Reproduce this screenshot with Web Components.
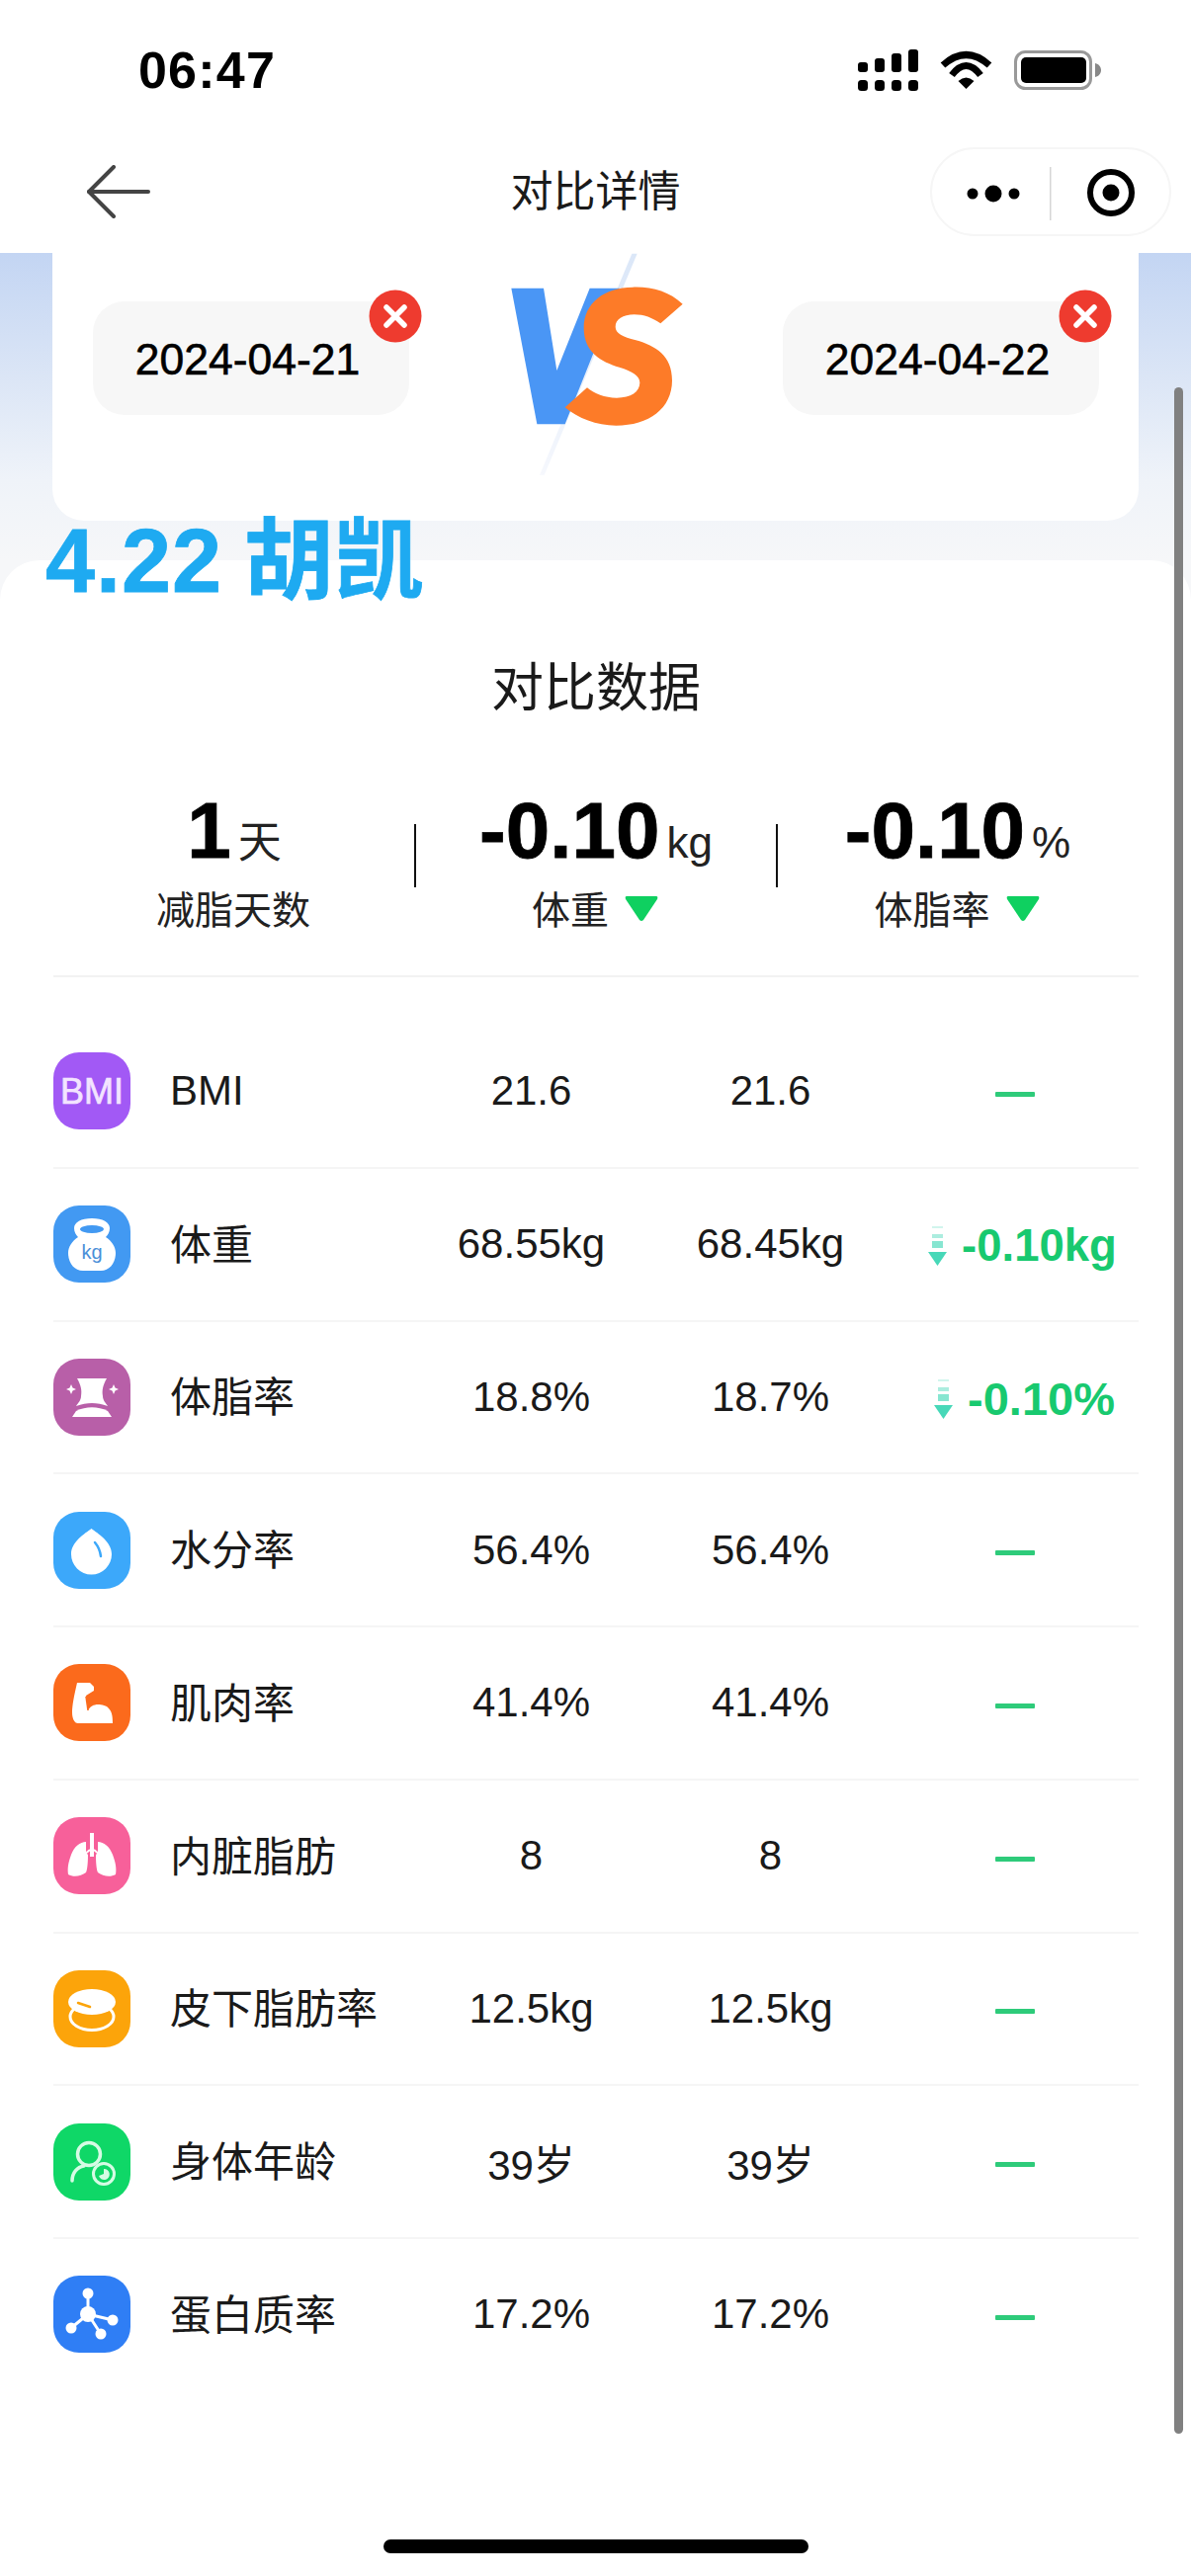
<!DOCTYPE html>
<html lang="zh-CN">
<head>
<meta charset="utf-8">
<title>对比详情</title>
<style>
html,body{margin:0;padding:0;background:#fff}
body{font-family:"Liberation Sans","Noto Sans CJK SC",sans-serif;color:#1a1a1a}
</style>
</head>
<body>
<compare-page>
  <status-bar time="06:47"></status-bar>
  <nav-bar title="对比详情"></nav-bar>
  <compare-hero>
    <date-pill slot="left">2024-04-21</date-pill>
    <date-pill slot="right">2024-04-22</date-pill>
    <span slot="title">4.22 胡凯</span>
  </compare-hero>
  <data-panel heading="对比数据">
    <stat-row slot="stats">
      <stat-cell value="1" unit="天" label="减脂天数"></stat-cell>
      <stat-cell value="-0.10" unit="kg" label="体重" down></stat-cell>
      <stat-cell value="-0.10" unit="%" label="体脂率" down></stat-cell>
    </stat-row>
    <metric-row icon="bmi" label="BMI" a="21.6" b="21.6"></metric-row>
    <metric-row icon="kettle" label="体重" a="68.55kg" b="68.45kg" delta="-0.10kg"></metric-row>
    <metric-row icon="body" label="体脂率" a="18.8%" b="18.7%" delta="-0.10%"></metric-row>
    <metric-row icon="water" label="水分率" a="56.4%" b="56.4%"></metric-row>
    <metric-row icon="muscle" label="肌肉率" a="41.4%" b="41.4%"></metric-row>
    <metric-row icon="lungs" label="内脏脂肪" a="8" b="8"></metric-row>
    <metric-row icon="fat" label="皮下脂肪率" a="12.5kg" b="12.5kg"></metric-row>
    <metric-row icon="age" label="身体年龄" a="39岁" b="39岁"></metric-row>
    <metric-row icon="protein" label="蛋白质率" a="17.2%" b="17.2%" last></metric-row>
  </data-panel>
</compare-page>
<script>
const define = (name, css, render, base = HTMLElement) => {
  customElements.define(name, class extends base {
    connectedCallback() {
      if (this.shadowRoot) return;
      this.attachShadow({ mode: 'open' }).innerHTML = `<style>${css}</style>${render(this)}`;
    }
  });
};

define('compare-page', `
  :host{display:block;position:relative;width:1205px;height:2607px;overflow:hidden;background:#fff}
  .scroll{position:absolute;left:1188px;top:392px;width:9px;height:2071px;border-radius:5px;background:#808080;z-index:5}
  .home{position:absolute;left:388px;top:2570px;width:430px;height:14px;border-radius:7px;background:#000;z-index:5}
`, () => `<slot></slot><div class="scroll"></div><div class="home"></div>`);

define('status-bar', `
  :host{display:flex;align-items:center;height:122px;padding:10px 91px 0 140px;background:#fff}
  .t{font-weight:700;font-size:52px;letter-spacing:1.200px;color:#000;flex:1}
  svg{display:block}
  .sig{margin-right:22px}
  .wifi{margin-right:22px}
`, h => `
  <div class="t">${h.getAttribute('time')}</div>
  <svg class="sig" width="61" height="42" viewBox="0 0 61 42" fill="#000">
    <rect x="0" y="13" width="10" height="10" rx="3"/><rect x="17" y="9" width="10" height="14" rx="3"/>
    <rect x="34" y="4" width="10" height="19" rx="3"/><rect x="51" y="0" width="10" height="23" rx="3"/>
    <rect x="0" y="31" width="10" height="11" rx="3.5"/><rect x="17" y="31" width="10" height="11" rx="3.5"/>
    <rect x="34" y="31" width="10" height="11" rx="3.5"/><rect x="51" y="31" width="10" height="11" rx="3.5"/>
  </svg>
  <svg class="wifi" width="53" height="40" viewBox="0 0 53 40">
    <path d="M3 15 Q26.500 -6 50 15" fill="none" stroke="#000" stroke-width="7"/>
    <path d="M12 25 Q26.500 6 41 25" fill="none" stroke="#000" stroke-width="7"/>
    <path d="M18.500 31 Q26.500 24 34.500 31 L26.500 39Z" fill="#000"/>
  </svg>
  <svg width="88" height="40" viewBox="0 0 88 40">
    <rect x="1.500" y="1.500" width="76" height="37" rx="10" fill="none" stroke="#999" stroke-width="3"/>
    <rect x="7" y="7" width="66" height="26" rx="5" fill="#000"/>
    <path d="M82 13 C86 14 88 17 88 20 C88 23 86 26 82 27Z" fill="#888"/>
  </svg>`);

define('nav-bar', `
  :host{display:grid;grid-template-columns:1fr auto 1fr;align-items:center;height:124px;background:#fff}
  .back{padding-left:88px;display:flex}
  .t{font-size:43px;line-height:60px;color:#1a1a1a;white-space:nowrap}
  .cap{justify-self:end;margin-right:20px;width:244px;height:90px;box-sizing:border-box;border:2px solid #f6f6f6;border-radius:45px;display:flex;align-items:center;background:#fff}
  .cap svg{display:block}
`, h => `
  <div class="back"><svg width="64" height="54" viewBox="0 0 64 54" fill="none" stroke="#444" stroke-width="4" stroke-linecap="round" stroke-linejoin="round"><path d="M27 2 L2 27 L27 52"/><path d="M2 27 H62"/></svg></div>
  <div class="t">${h.getAttribute('title')}</div>
  <div class="cap"><svg width="240" height="86" viewBox="0 0 240 86">
    <circle cx="41" cy="45" r="5.500"/><circle cx="62" cy="45" r="8.500"/><circle cx="83" cy="45" r="5.500"/>
    <rect x="119" y="18" width="1.500" height="54" fill="#d6d6d6"/>
    <circle cx="181" cy="44" r="21" fill="none" stroke="#000" stroke-width="6"/><circle cx="181" cy="44" r="8.500"/>
  </svg></div>`);

define('compare-hero', `
  :host{display:block;position:relative;z-index:2;height:311px;background:linear-gradient(180deg,#c3d5f3 0,#dce6f6 130px,#eff3f9 230px,#f6f7f9 311px)}
  .card{margin:0 53px;height:271px;box-sizing:border-box;padding:49px 40px 0 41px;background:#fff;border-radius:0 0 32px 32px;display:grid;grid-template-columns:320px 1fr 320px;align-items:start}
  .vs{margin:-45px 0 0 66px;display:block;overflow:visible}
  .title{margin:-2px 0 0 46px;font-weight:700;font-size:90px;line-height:86px;letter-spacing:1px;word-spacing:-4px;color:#1eaaf1;white-space:nowrap;-webkit-text-stroke:.8px #1eaaf1}
`, () => `
  <div class="card">
    <slot name="left"></slot>
    <svg class="vs" width="240" height="224" viewBox="0 0 720 672">
      <defs><linearGradient id="sl" x1="1" y1="0" x2="0" y2="1"><stop offset="0" stop-color="#dbe7f8"/><stop offset=".5" stop-color="#e6eefa"/><stop offset="1" stop-color="#f6f8fd"/></linearGradient></defs>
      <polygon points="478,-10 494,-10 212,662 198,662" fill="url(#sl)"/>
      <polygon points="112,95 210,95 250,345 350,95 440,95 275,508 190,508" fill="#4a96f5"/>
      <path fill="#fd7b28" d="M632 143 C590 105 540 90 480 92 C395 92 332 140 332 215 C332 290 385 318 440 335 C480 348 502 360 502 382 C502 410 475 428 432 428 C395 428 365 415 342 397 L275 457 C315 490 370 512 430 512 C530 512 600 460 600 375 C600 300 550 270 490 253 C450 242 428 232 428 212 C428 190 450 175 485 175 C515 175 540 185 565 202Z"/>
    </svg>
    <slot name="right"></slot>
  </div>
  <div class="title"><slot name="title"></slot></div>`);

define('date-pill', `
  :host{display:flex;position:relative;width:320px;height:115px;box-sizing:border-box;padding:2px 7px 0 0;align-items:center;justify-content:center;background:#f7f7f7;border-radius:32px;font-size:44.500px;color:#000;-webkit-text-stroke:.6px #000}
  svg{position:absolute;left:279px;top:-12px}
`, h => `<slot></slot><svg width="54" height="54" viewBox="0 0 54 54"><circle cx="27" cy="27" r="26.500" fill="#ee3b2f"/><path d="M18 18 L36 36 M36 18 L18 36" stroke="#fff" stroke-width="5.500" stroke-linecap="round"/></svg>`);

define('data-panel', `
  :host{display:block;position:relative;z-index:1;background:#f6f7f9}
  .in{background:#fff;border-radius:40px 40px 0 0;padding:100px 53px 0 54px;height:1940px;box-sizing:content-box}
  h2{margin:0;font-weight:400;font-size:53px;line-height:60px;text-align:center;color:#1a1a1a}
  .rows{display:grid;grid-auto-rows:154.750px;margin-top:39px}
`, h => `<div class="in"><h2>${h.getAttribute('heading')}</h2><slot name="stats"></slot><div class="rows"><slot></slot></div></div>`);

define('stat-row', `
  :host{display:grid;grid-template-columns:repeat(3,1fr);margin-top:75px;padding-bottom:40px;border-bottom:2px solid #f2f2f2}
`, () => `<slot></slot>`);

define('stat-cell', `
  :host{display:block;text-align:center;position:relative;color:#111}
  .n{font-weight:700;font-size:80px;line-height:78px;white-space:nowrap;color:#000;-webkit-text-stroke:.8px #000}
  .u{font-weight:400;font-size:44px;line-height:0;margin-left:7px;color:#222;-webkit-text-stroke:0}
  .l{display:flex;justify-content:center;align-items:center;gap:16px;margin-top:17px;padding-right:2px;font-size:39px;line-height:50px;color:#222;white-space:nowrap}
  svg{display:block;margin-top:-4px}
  .line{position:absolute;left:-1px;top:32px;width:2px;height:64px;background:#111}
`, h => `
  ${h.previousElementSibling ? '<div class="line"></div>' : ''}
  <div class="n">${h.getAttribute('value')}<span class="u">${h.getAttribute('unit')}</span></div>
  <div class="l"><span>${h.getAttribute('label')}</span>${h.hasAttribute('down') ? '<svg width="34" height="26" viewBox="0 0 34 26"><path d="M2 0 H32 Q34 0 33 3 L19 24 Q17 26 15 24 L1 3 Q0 0 2 0Z" fill="#0fd060"/></svg>' : ''}</div>`);

const ICONS = {
  bmi: ['#a259f5', `<text x="39" y="52" text-anchor="middle" font-family="Liberation Sans" font-size="36" fill="#f3e4ff" stroke="#f3e4ff" stroke-width=".7">BMI</text>`],
  kettle: ['#4299f2', `<path d="M39 13 C28 13 21 17 21 23 C21 27 23 30 25 32 C19 36 15 42 15 48 C15 58 21 66 30 66 H48 C57 66 63 58 63 48 C63 42 59 36 53 32 C55 30 57 27 57 23 C57 17 50 13 39 13Z" fill="#fff"/><ellipse cx="39" cy="24" rx="12" ry="4" fill="#4299f2"/><text x="39" y="54" text-anchor="middle" font-family="Liberation Sans" font-size="20" fill="#4a8fd8">kg</text>`],
  body: ['#b85fa8', `<path d="M24 20 H54 C50 27 49 32 50 38 C50 42 53 45 55 48 C44 44 34 44 23 48 C25 45 28 42 28 38 C29 32 28 27 24 20Z" fill="#fff"/><path d="M23 53 C33 48 45 48 55 53 L59 59 H19Z" fill="#fff"/><path d="M18 26 L19.500 29.500 L23 31 L19.500 32.500 L18 36 L16.500 32.500 L13 31 L16.500 29.500Z M61 26 L62.500 29.500 L66 31 L62.500 32.500 L61 36 L59.500 32.500 L56 31 L59.500 29.500Z" fill="#fff"/>`],
  water: ['#3ca8fa', `<path d="M38.500 17 C45 22 59 30 59 43 A20.500 20.500 0 0 1 18 43 C18 30 32 22 38.500 17Z" fill="#fff"/><path d="M42 31 Q47 37 48 45" fill="none" stroke="#3ca8fa" stroke-width="2.500" stroke-linecap="round"/>`],
  muscle: ['#fb6a1c', `<path d="M24 19 H37 L41 23 V27 L33 32 L35 47 C37 43 41 41 45 41 C49 41 54 42 56 45 C59 48 60 52 60 60 H25 C21 60 19 55 19 49 C19 42 21 32 24 19Z" fill="#fff"/><path d="M33 33 L35 47" stroke="#fb6a1c" stroke-width="1.500"/>`],
  lungs: ['#f7609a', `<rect x="37" y="16" width="4" height="24" fill="#fff"/><path d="M37 33 L31 38 M41 33 L47 38" stroke="#fff" stroke-width="2"/><path d="M33 25 C27 25 21 30 18 38 C15 46 14 52 15 58 C20 61 28 60 33 56 C35 52 35 40 35 38 L33 36Z" fill="#fff"/><path d="M45 25 C51 25 57 30 60 38 C63 46 64 52 63 58 C58 61 50 60 45 56 C43 52 43 40 43 38 L45 36Z" fill="#fff"/>`],
  fat: ['#fca40a', `<ellipse cx="39" cy="47" rx="22" ry="13.500" fill="none" stroke="#fff" stroke-width="3"/><ellipse cx="39" cy="32" rx="24" ry="13" fill="#fff"/><path d="M25 33 L37 37" stroke="#fca40a" stroke-width="2.500" stroke-linecap="round"/>`],
  age: ['#0fd767', `<g fill="none" stroke="#d6fbe4" stroke-width="3.500" stroke-linecap="round"><circle cx="36" cy="31" r="11.500"/><path d="M19 58 C19 50 24 44 31 43"/><circle cx="51" cy="51" r="10.500" stroke-width="3"/></g><path d="M51 46 A5.500 5.500 0 1 1 46 53 L51 51Z" fill="#d6fbe4"/>`],
  protein: ['#2f7ef5', `<g stroke="#fff" stroke-width="3" fill="none"><path d="M35 18 V39 L60 45 M35 39 L18 53 M35 39 L48 59"/></g><g fill="#fff"><circle cx="35" cy="39" r="8"/><circle cx="35" cy="18" r="5.500"/><circle cx="60" cy="45" r="5.500"/><circle cx="18" cy="53" r="5.500"/><circle cx="48" cy="59" r="5.500"/></g>`]
};

define('metric-icon', `
  :host{display:block;width:78px;height:78px;flex:none}
  svg{display:block}
`, h => {
  const [bg, body] = ICONS[h.getAttribute('name')];
  return `<svg width="78" height="78" viewBox="0 0 78 78"><rect width="78" height="78" rx="26" fill="${bg}"/>${body}</svg>`;
});

define('metric-row', `
  :host{display:grid;grid-template-columns:363px 242px 242px 1fr;align-items:center;box-sizing:border-box;border-bottom:2px solid #f5f5f5;font-size:42px;color:#1a1a1a}
  :host([last]){border-bottom-color:transparent}
  .h{display:flex;align-items:center;gap:40px}
  .cjk{margin-bottom:6px}
  .v{text-align:center;white-space:nowrap;padding-right:1px}
  .dash{justify-self:center;width:40px;height:5px;margin-top:6px;border-radius:1px;background:#2ecb7a}
  .delta{display:flex;justify-content:center;align-items:center;gap:15px;margin:4px 0 0 16px;font-weight:700;font-size:45.500px;color:#18c96f;white-space:nowrap}
  .pct{font-size:47px;margin-left:20px}
  svg{display:block}
`, h => {
  const d = h.getAttribute('delta');
  const l = h.getAttribute('label');
  return `
  <div class="h"><metric-icon name="${h.getAttribute('icon')}"></metric-icon><span class="${/[^\x00-\x7f]/.test(l) ? 'cjk' : ''}">${l}</span></div>
  <div class="v">${h.getAttribute('a')}</div>
  <div class="v">${h.getAttribute('b')}</div>
  ${d ? `<div class="delta ${d.endsWith('%') ? 'pct' : ''}"><svg width="19" height="40" viewBox="0 0 19 40"><rect x="4" y="0" width="11" height="2" fill="#47d8b8" opacity=".25"/><rect x="4" y="8" width="11" height="4" fill="#47d8b8" opacity=".45"/><rect x="4" y="15" width="11" height="7" fill="#47d8b8" opacity=".65"/><path d="M0 26 H19 L9.500 40Z" fill="#47d8b8"/></svg><span>${d}</span></div>` : `<div class="dash"></div>`}`;
});
</script>
</body>
</html>
